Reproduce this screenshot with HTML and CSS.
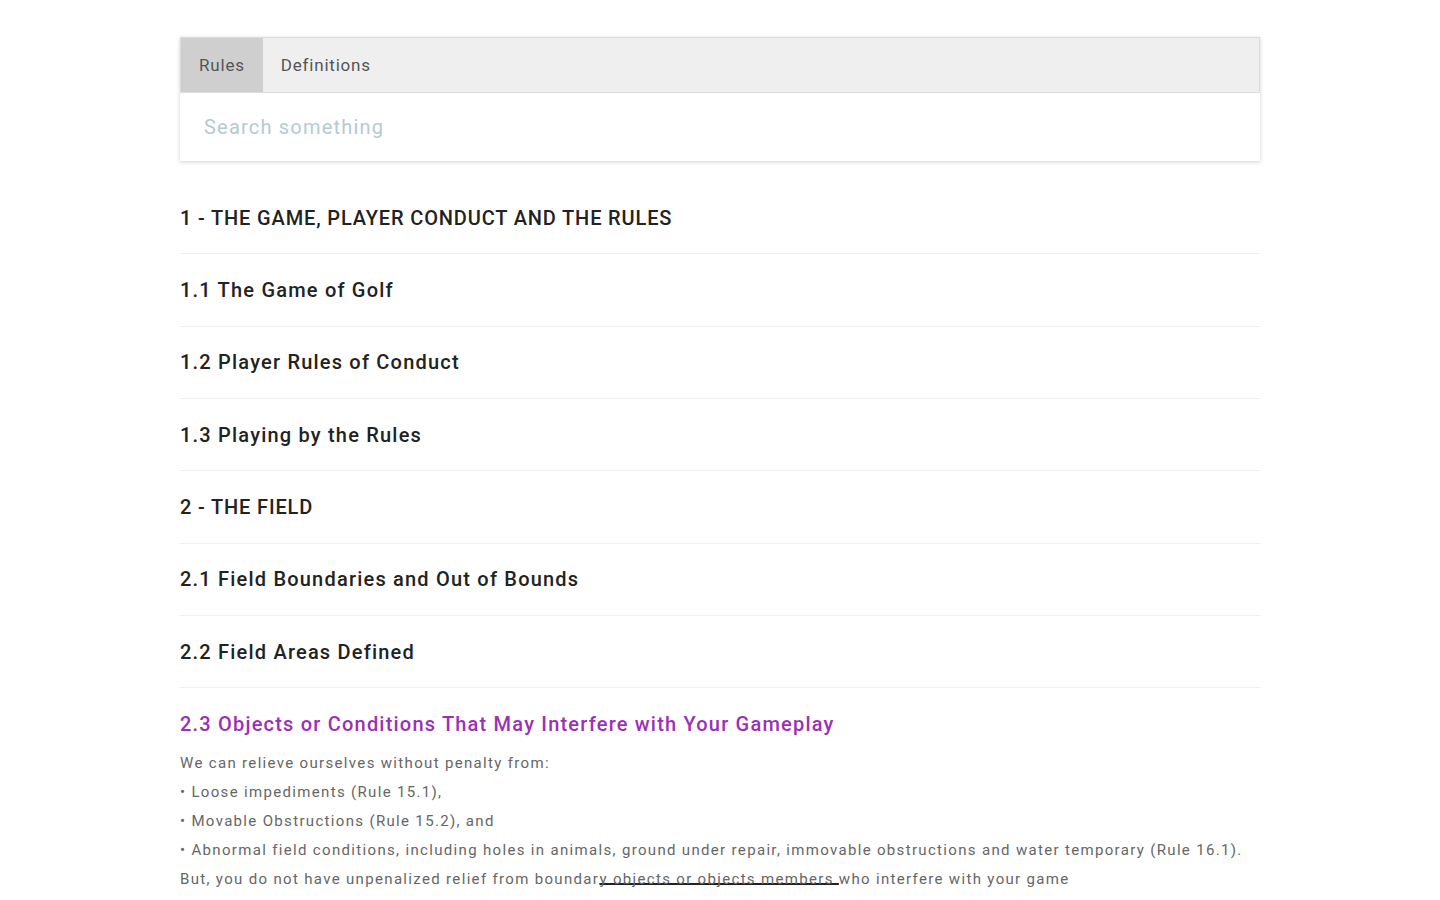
FILE: index.html
```html
<!DOCTYPE html>
<html lang="en">
<head>
  <meta charset="UTF-8" />
  <meta name="viewport" content="width=device-width, initial-scale=1" />
  <title>Golf Rules</title>
  <link rel="stylesheet" href="styles.css">
</head>
<body>
  <div class="page">
    <div class="panel">
      <div class="tabs">
        <div class="tab active">Rules</div>
        <div class="tab">Definitions</div>
      </div>
      <div class="search">
        <input type="text" placeholder="Search something" />
      </div>
    </div>

    <ul class="rules">
      <li class="rule section">1 - THE GAME, PLAYER CONDUCT AND THE RULES</li>
      <li class="rule">1.1 The Game of Golf</li>
      <li class="rule">1.2 Player Rules of Conduct</li>
      <li class="rule">1.3 Playing by the Rules</li>
      <li class="rule section">2 - THE FIELD</li>
      <li class="rule">2.1 Field Boundaries and Out of Bounds</li>
      <li class="rule">2.2 Field Areas Defined</li>
      <li class="rule open">
        <div class="rule-title">2.3 Objects or Conditions That May Interfere with Your Gameplay</div>
        <div class="rule-body">
          <p>We can relieve ourselves without penalty from:</p>
          <p>• Loose impediments (Rule 15.1),</p>
          <p>• Movable Obstructions (Rule 15.2), and</p>
          <p>• Abnormal field conditions, including holes in animals, ground under repair, immovable obstructions and water temporary (Rule 16.1).</p>
          <p>But, you do not have unpenalized relief from boundar<span class="mark">y objects or objects members </span>who interfere with your game</p>
        </div>
      </li>
    </ul>
  </div>
</body>
</html>
```

FILE: styles.css
```css
body {
  margin: 0;
  font-family: Roboto, 'Liberation Sans', sans-serif;
  background-color: #fff;
  color: #222;
}
.page {
  width: 1080px;
  margin: 0 auto;
  padding-top: 37px;
}
.panel {
  box-shadow: 0 1px 4px rgba(0, 0, 0, 0.18);
}
.tabs {
  display: flex;
  height: 54px;
  background-color: #efefef;
  border: 1px solid #dcdcdc;
}
.tab {
  display: flex;
  align-items: center;
  padding: 0 18px;
  font-size: 17px;
  letter-spacing: 0.8px;
  color: #555;
}
.tab.active {
  background-color: #cfcfcf;
}
.search {
  background-color: #fff;
  height: 68px;
  display: flex;
  align-items: center;
  padding: 0 22px;
}
.search input {
  border: none;
  outline: none;
  width: 100%;
  font-family: inherit;
  font-size: 20px;
  letter-spacing: 1.2px;
  color: #333;
  background: transparent;
}
.search input::placeholder {
  color: #b3cbd0;
}
.rules {
  list-style: none;
  margin: 21px 0 0;
  padding: 0;
}
.rule {
  height: 71.33px;
  display: flex;
  align-items: center;
  border-bottom: 1px solid #eef0f0;
  font-size: 20px;
  font-weight: 500;
  letter-spacing: 1.2px;
  color: #222;
}
.rule.section {
  letter-spacing: 0.85px;
}
.rule.open {
  display: block;
  height: auto;
  border-bottom: none;
  padding-top: 24px;
}
.rule-title {
  color: #9b30b8;
  line-height: 24px;
}
.rule-body {
  margin-top: 13px;
  font-size: 15px;
  font-weight: 400;
  letter-spacing: 1.33px;
  color: #666;
}
.rule-body p {
  margin: 0;
  line-height: 29px;
}
.mark {
  text-decoration: underline;
  text-decoration-color: #222;
  text-decoration-thickness: 2px;
  text-decoration-skip-ink: none;
  text-underline-offset: -1px;
}
```
